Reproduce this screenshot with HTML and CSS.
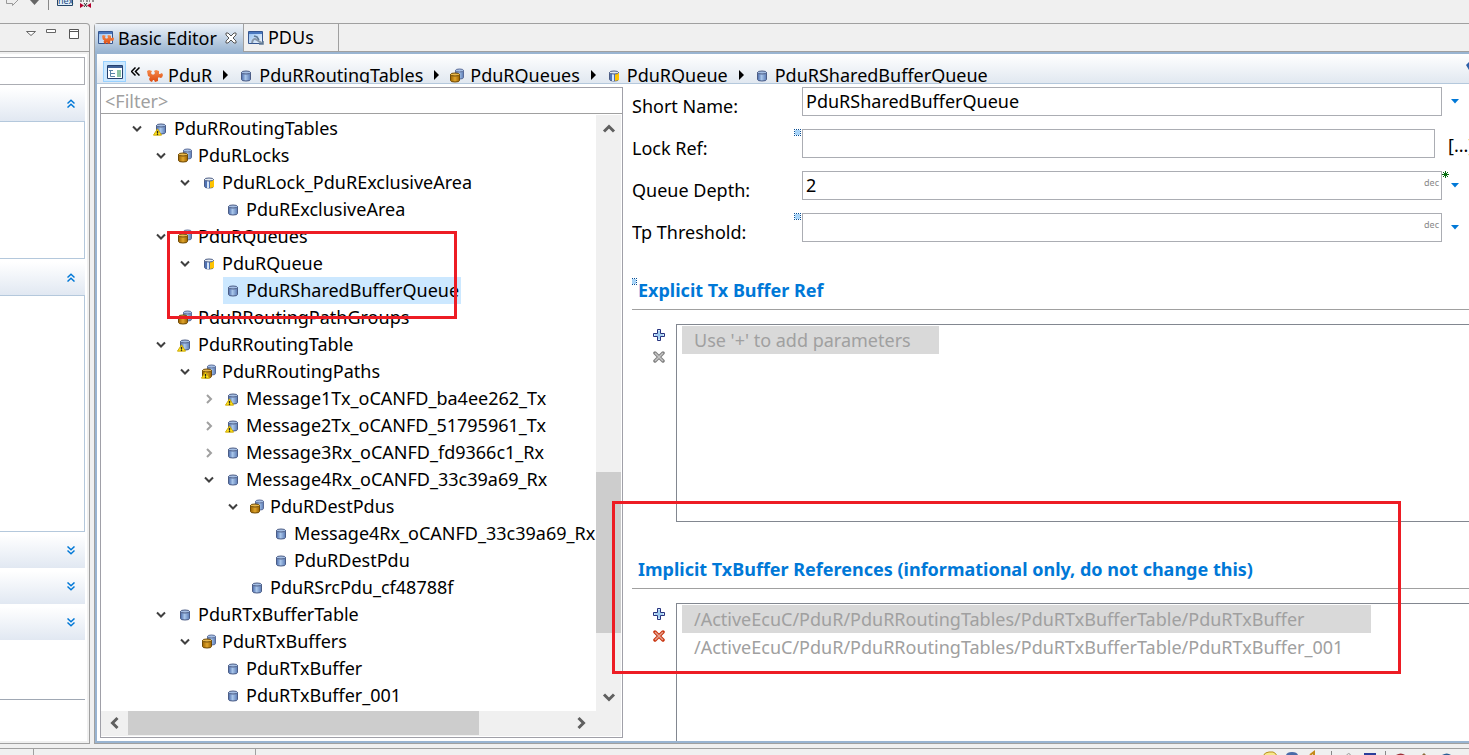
FILE: index.html
```
<!DOCTYPE html>
<html lang="en">
<head>
<meta charset="utf-8">
<title>Basic Editor</title>
<link rel="stylesheet" href="styles.css">
</head>
<body>
<svg class="defs" aria-hidden="true">
  <defs>
    <linearGradient id="g-blue"><stop offset="0" stop-color="#4a6bab"/><stop offset=".45" stop-color="#a9c6ea"/><stop offset="1" stop-color="#5b7bb5"/></linearGradient>
    <linearGradient id="g-gold"><stop offset="0" stop-color="#9a6200"/><stop offset=".5" stop-color="#e0a52c"/><stop offset="1" stop-color="#9a6200"/></linearGradient>
    <linearGradient id="g-orange" x2="0" y2="1"><stop offset="0" stop-color="#f58a4b"/><stop offset="1" stop-color="#dd4b10"/></linearGradient>
    <linearGradient id="g-win" x2="1" y2="1"><stop offset="0" stop-color="#8ebdf0"/><stop offset="1" stop-color="#f4f9ff"/></linearGradient>
  </defs>
  <symbol id="cyl" viewBox="0 0 16 16">
    <path d="M3.500 4.500v7q0 1.500 4.500 1.500t4.500-1.500v-7z" fill="url(#g-blue)" stroke="#4b5c85"/>
    <ellipse cx="8" cy="4.500" rx="4.500" ry="1.500" fill="#a5bfe4" stroke="#4b5c85"/>
  </symbol>
  <symbol id="choice" viewBox="0 0 16 16">
    <path d="M3.500 4.500v7q0 1.500 4.500 1.500t4.500-1.500v-7z" fill="#4f73b5" stroke="#4b5c85"/>
    <path d="M6 5h2v8H6z" fill="#d5e6fa"/>
    <path d="M9 5h4v7l-4 1z" fill="#ffc400"/>
    <ellipse cx="8" cy="4.500" rx="4.500" ry="1.500" fill="#e3eaf0" stroke="#4b5c85"/>
  </symbol>
  <symbol id="multi" viewBox="0 0 16 16">
    <path d="M6.500 2.500v7q0 1.500 4 1.500t4-1.500v-7z" fill="url(#g-blue)" stroke="#5b6c98"/>
    <ellipse cx="10.500" cy="2.500" rx="4" ry="1.500" fill="#a5bfe4" stroke="#5b6c98"/>
    <path d="M1.500 6.500v6q0 1.500 4.500 1.500t4.500-1.500v-6z" fill="url(#g-gold)" stroke="#6e4906"/>
    <ellipse cx="6" cy="6.500" rx="4.500" ry="1.500" fill="#e9b94d" stroke="#6e4906"/>
  </symbol>
  <symbol id="warn" viewBox="0 0 10 8">
    <path d="M5 .5 9.500 7.500H.5z" fill="#ffe11a" stroke="#c9a500"/><path d="M4.500 3h1v2h-1zM4.500 6h1v1h-1z" fill="#222" stroke="#222" stroke-width=".5"/>
  </symbol>
  <symbol id="puzzle" viewBox="0 0 16 14">
    <path d="M0 2l2-1 3 1-1 2 1 1.500h2L8 4 7 2l2-1 3 1v3h1l2-1 1 2-1 2.500-2 .5-1-1-1 1v3l-3 1-1-2H6l-1 2-2-1-1-2 1-2-2-1z" fill="url(#g-orange)"/>
  </symbol>
  <symbol id="down" viewBox="0 0 10 10"><path d="M1 2.500l4 4 4-4" fill="none" stroke="#404040" stroke-width="2"/></symbol>
  <symbol id="right" viewBox="0 0 10 10"><path d="M3 1l4 4-4 4" fill="none" stroke="#a0a0a0" stroke-width="2"/></symbol>
  <symbol id="arrow" viewBox="0 0 14 14"><path d="M2 9.500l5-5 5 5" fill="none" stroke="#606060" stroke-width="3"/></symbol>
  <symbol id="dbl" viewBox="0 0 8 8"><path d="M.5 4 4 .8 7.500 4M.5 8 4 4.800 7.500 8" fill="none" stroke="#0078d7" stroke-width="1.500"/></symbol>
  <symbol id="plus" viewBox="0 0 12 12"><path d="M4.500.5h3v4h4v3h-4v4h-3v-4h-4v-3h4z" fill="#d4ecfc" stroke="#26327e"/><path d="M6 2v8M2 6h8" stroke="#7db8ea"/></symbol>
  <symbol id="cross" viewBox="0 0 12 12"><path d="M2 2l8 8M10 2l-8 8" stroke="currentColor" stroke-width="3.500" stroke-linecap="round"/><path d="M2 2l8 8M10 2l-8 8" stroke="#fff" stroke-opacity=".55" stroke-width="1.500"/></symbol>
  <symbol id="caret" viewBox="0 0 8 5"><path d="M0 0h8L4 4.500z" fill="#0078d7"/></symbol>
  <symbol id="mark" viewBox="0 0 7 7"><path d="M1 1h5v5H1z" fill="#a8d4f8"/><path d="M0 0h1v1H0zM2 0h1v1H2zM4 0h1v1H4zM6 0h1v1H6zM0 2h1v1H0zM0 4h1v1H0zM0 6h1v1H0zM6 2h1v1H6zM6 4h1v1H6zM6 6h1v1H6zM2 6h1v1H2zM4 6h1v1H4z" fill="#0a4f94"/></symbol>
</svg>

<header class="toolbar">
  <svg width="100" height="12" aria-hidden="true">
    <path d="M6.500 0v3.500h6v2L18 0" fill="#eee" stroke="#999"/>
    <path d="M30 0h9l-4.500 5z" fill="#666"/><path d="M48.500 0v10" stroke="#888"/>
    <path d="M57.500 0v5.500h15V0" fill="#e3f0fb" stroke="#246"/>
    <text class="hex" x="58" y="4">hex</text>
    <path d="M80 1h2M83 1h1M86 1h2M89 1h1M92 1h2" stroke="#333"/>
    <path d="M80 3v5l4-2.500zM91 3v5l-4-2.500z" fill="#b3002d"/><path d="M84 3l3 4M87 3l-3 4" stroke="#333"/>
  </svg>
</header>

<main class="workbench">
  <aside class="side">
    <div class="side-head">
      <svg width="54" height="12" aria-hidden="true"><path d="M.5 2.500h9L5 6.500zM20.500.500h9v3h-9z" fill="#fff" stroke="#666"/><path d="M43.500.5h9v9h-9zM43 2.500h10" fill="#fff" stroke="#555"/></svg>
    </div>
    <div class="side-body">
      <input class="side-search" aria-label="Search">
      <button class="bar" aria-label="Collapse"><svg><use href="#dbl"/></svg></button>
      <div class="pane pane-a"></div>
      <button class="bar" aria-label="Collapse"><svg><use href="#dbl"/></svg></button>
      <div class="pane pane-b"></div>
      <button class="bar closed" aria-label="Expand"><svg><use href="#dbl"/></svg></button>
      <button class="bar closed" aria-label="Expand"><svg><use href="#dbl"/></svg></button>
      <button class="bar closed" aria-label="Expand"><svg><use href="#dbl"/></svg></button>
      <div class="rule"></div>
    </div>
  </aside>

  <section class="editor">
    <nav class="tabs">
      <button class="tab active">
        <svg width="17" height="16"><path d="M.5 1.500h14v12H.5z" fill="url(#g-win)" stroke="#35558f"/><path d="M1 2h13v2H1z" fill="#4a78bf"/><use href="#puzzle" x="4" y="4" width="12" height="11"/></svg>
        Basic Editor
        <svg class="close" width="12" height="12"><path d="M1 1h2l3 3 3-3h2v2L8 6l3 3v2H9L6 8l-3 3H1V9l3-3-3-3z" fill="#fff" stroke="#555"/></svg>
      </button>
      <button class="tab">
        <svg width="17" height="16"><path d="M.5 1.500h14v12H.5z" fill="url(#g-win)" stroke="#35558f"/><path d="M1 2h13v2H1z" fill="#4a78bf"/><path d="M4 13q1-6 5-3t6 3" fill="none" stroke="#8796a8" stroke-width="2"/><path d="M6 6l3 1 2 3M11 14h4v-3" fill="none" stroke="#5e7894" stroke-width="1.500"/></svg>
        PDUs
      </button>
    </nav>

    <div class="frame">
      <nav class="crumbs">
        <button class="outline" aria-label="Show tree"><svg width="16" height="14"><path d="M.5.5h15v13H.5z" fill="#fff" stroke="#25406e"/><path d="M1 1h14v2H1z" fill="#3f6299"/><path d="M10 5h4v7h-4z" fill="#8cc4a4"/><path d="M3.500 5v6.500H8M3.500 8.500H8M2 5.500h4" fill="none" stroke="#5c85a8"/></svg></button>
        <span class="back" aria-hidden="true"><svg width="9" height="9"><path d="M4.500.5l-4 4 4 4M8.500.5l-4 4 4 4" fill="none" stroke="#000" stroke-width="1.500"/></svg></span>
        <a href="#"><svg><use href="#puzzle"/></svg>PduR</a><i></i>
        <a href="#"><svg><use href="#cyl"/></svg>PduRRoutingTables</a><i></i>
        <a href="#"><svg><use href="#multi"/></svg>PduRQueues</a><i></i>
        <a href="#"><svg><use href="#choice"/></svg>PduRQueue</a><i></i>
        <a href="#"><svg><use href="#cyl"/></svg>PduRSharedBufferQueue</a>
        <svg class="more" width="3" height="8"><path d="M3 0L0 3l3 5z" fill="#2c5fa8"/></svg>
      </nav>

      <div class="content">
        <div class="outline-pane">
          <input class="filter" placeholder="&lt;Filter&gt;" aria-label="Filter">
          <div class="tree-area">
            <ul class="tree">
              <li><div class="row"><button class="tw" aria-label="Toggle"><svg><use href="#down"/></svg></button><span class="node"><svg><use href="#cyl"/><use href="#warn" x="0" y="7" width="9" height="8"/></svg>PduRRoutingTables</span></div>
                <ul>
                  <li><div class="row"><button class="tw" aria-label="Toggle"><svg><use href="#down"/></svg></button><span class="node"><svg><use href="#multi"/></svg>PduRLocks</span></div>
                    <ul>
                      <li><div class="row"><button class="tw" aria-label="Toggle"><svg><use href="#down"/></svg></button><span class="node"><svg><use href="#choice"/></svg>PduRLock_PduRExclusiveArea</span></div>
                        <ul><li><div class="row"><span class="tw"></span><span class="node"><svg><use href="#cyl"/></svg>PduRExclusiveArea</span></div></li></ul>
                      </li>
                    </ul>
                  </li>
                  <li><div class="row"><button class="tw" aria-label="Toggle"><svg><use href="#down"/></svg></button><span class="node"><svg><use href="#multi"/></svg>PduRQueues</span></div>
                    <ul>
                      <li><div class="row"><button class="tw" aria-label="Toggle"><svg><use href="#down"/></svg></button><span class="node"><svg><use href="#choice"/></svg>PduRQueue</span></div>
                        <ul><li><div class="row"><span class="tw"></span><span class="node selected"><svg><use href="#cyl"/></svg>PduRSharedBufferQueue</span></div></li></ul>
                      </li>
                    </ul>
                  </li>
                  <li><div class="row"><span class="tw"></span><span class="node"><svg><use href="#multi"/></svg>PduRRoutingPathGroups</span></div></li>
                  <li><div class="row"><button class="tw" aria-label="Toggle"><svg><use href="#down"/></svg></button><span class="node"><svg><use href="#cyl"/><use href="#warn" x="0" y="7" width="9" height="8"/></svg>PduRRoutingTable</span></div>
                    <ul>
                      <li><div class="row"><button class="tw" aria-label="Toggle"><svg><use href="#down"/></svg></button><span class="node"><svg><use href="#multi"/><use href="#warn" x="0" y="7" width="9" height="8"/></svg>PduRRoutingPaths</span></div>
                        <ul>
                          <li><div class="row"><button class="tw" aria-label="Toggle"><svg><use href="#right"/></svg></button><span class="node"><svg><use href="#cyl"/><use href="#warn" x="0" y="7" width="9" height="8"/></svg>Message1Tx_oCANFD_ba4ee262_Tx</span></div></li>
                          <li><div class="row"><button class="tw" aria-label="Toggle"><svg><use href="#right"/></svg></button><span class="node"><svg><use href="#cyl"/><use href="#warn" x="0" y="7" width="9" height="8"/></svg>Message2Tx_oCANFD_51795961_Tx</span></div></li>
                          <li><div class="row"><button class="tw" aria-label="Toggle"><svg><use href="#right"/></svg></button><span class="node"><svg><use href="#cyl"/></svg>Message3Rx_oCANFD_fd9366c1_Rx</span></div></li>
                          <li><div class="row"><button class="tw" aria-label="Toggle"><svg><use href="#down"/></svg></button><span class="node"><svg><use href="#cyl"/></svg>Message4Rx_oCANFD_33c39a69_Rx</span></div>
                            <ul>
                              <li><div class="row"><button class="tw" aria-label="Toggle"><svg><use href="#down"/></svg></button><span class="node"><svg><use href="#multi"/></svg>PduRDestPdus</span></div>
                                <ul>
                                  <li><div class="row"><span class="tw"></span><span class="node"><svg><use href="#cyl"/></svg>Message4Rx_oCANFD_33c39a69_Rx</span></div></li>
                                  <li><div class="row"><span class="tw"></span><span class="node"><svg><use href="#cyl"/></svg>PduRDestPdu</span></div></li>
                                </ul>
                              </li>
                              <li><div class="row"><span class="tw"></span><span class="node"><svg><use href="#cyl"/></svg>PduRSrcPdu_cf48788f</span></div></li>
                            </ul>
                          </li>
                        </ul>
                      </li>
                    </ul>
                  </li>
                  <li><div class="row"><button class="tw" aria-label="Toggle"><svg><use href="#down"/></svg></button><span class="node"><svg><use href="#cyl"/></svg>PduRTxBufferTable</span></div>
                    <ul>
                      <li><div class="row"><button class="tw" aria-label="Toggle"><svg><use href="#down"/></svg></button><span class="node"><svg><use href="#multi"/></svg>PduRTxBuffers</span></div>
                        <ul>
                          <li><div class="row"><span class="tw"></span><span class="node"><svg><use href="#cyl"/></svg>PduRTxBuffer</span></div></li>
                          <li><div class="row"><span class="tw"></span><span class="node"><svg><use href="#cyl"/></svg>PduRTxBuffer_001</span></div></li>
                        </ul>
                      </li>
                    </ul>
                  </li>
                </ul>
              </li>
            </ul>
            <div class="vscroll">
              <button aria-label="Scroll up"><svg><use href="#arrow"/></svg></button>
              <div class="track"><div class="thumb"></div></div>
              <button class="flip" aria-label="Scroll down"><svg><use href="#arrow"/></svg></button>
            </div>
          </div>
          <div class="hscroll">
            <button class="to-left" aria-label="Scroll left"><svg><use href="#arrow"/></svg></button>
            <div class="track"><div class="thumb"></div></div>
            <button class="to-right" aria-label="Scroll right"><svg><use href="#arrow"/></svg></button>
          </div>
          <div class="highlight highlight-tree"></div>
        </div>

        <div class="form">
          <div class="field"><label for="short">Short Name:</label><span class="box"><input id="short" value="PduRSharedBufferQueue"></span><button class="menu" aria-label="Menu"><svg><use href="#caret"/></svg></button></div>
          <div class="field"><label for="lock">Lock Ref:</label><span class="box"><svg class="mark"><use href="#mark"/></svg><input id="lock"></span><button class="browse">[...]</button></div>
          <div class="field"><label for="depth">Queue Depth:</label><span class="box"><input id="depth" value="2"><small>dec</small><svg class="star" viewBox="0 0 7 7"><path d="M3.500 0v7M0 3.500h7M1 1l5 5M6 1l-5 5" stroke="#0a6e14"/></svg></span><button class="menu" aria-label="Menu"><svg><use href="#caret"/></svg></button></div>
          <div class="field"><label for="tp">Tp Threshold:</label><span class="box"><svg class="mark"><use href="#mark"/></svg><input id="tp"><small>dec</small></span><button class="menu" aria-label="Menu"><svg><use href="#caret"/></svg></button></div>

          <section class="refs">
            <h2><svg class="mark"><use href="#mark"/></svg>Explicit Tx Buffer Ref</h2>
            <div class="refs-body">
              <div class="actions"><button aria-label="Add"><svg><use href="#plus"/></svg></button><button class="off" aria-label="Remove" disabled><svg><use href="#cross"/></svg></button></div>
              <ul class="list"><li class="picked">Use '+' to add parameters</li></ul>
            </div>
          </section>
          <section class="refs">
            <h2>Implicit TxBuffer References (informational only, do not change this)</h2>
            <div class="refs-body">
              <div class="actions"><button aria-label="Add"><svg><use href="#plus"/></svg></button><button class="on" aria-label="Remove"><svg><use href="#cross"/></svg></button></div>
              <ul class="list"><li class="picked">/ActiveEcuC/PduR/PduRRoutingTables/PduRTxBufferTable/PduRTxBuffer</li><li>/ActiveEcuC/PduR/PduRRoutingTables/PduRTxBufferTable/PduRTxBuffer_001</li></ul>
            </div>
          </section>
        </div>
        <div class="highlight highlight-refs"></div>
      </div>
    </div>
  </section>
</main>

<footer class="status">
  <span class="cell first"></span><span class="cell second"></span>
  <svg width="210" height="6" aria-hidden="true">
    <path d="M4 7q2-4 6-4h4q3 1 4 4" fill="#f7e88b" stroke="#b8901a"/>
    <path d="M27 6q1-3 6-3t6 3z" fill="#4a6ba8"/><path d="M51 6l4-3v3" fill="none" stroke="#c48a1a" stroke-width="2"/>
    <path d="M72.500 2v5M126.500 2v5" stroke="#888"/><path d="M87 7q3-5 5 0" fill="none" stroke="#999"/>
    <path d="M105 4h12v3h-12z" fill="#2b3f9b"/><path d="M137 6q5-3 9 0z" fill="#9b3037"/><path d="M163 6l2-2 2 2z" fill="#8a6b3a"/><path d="M183 6q5-3 9 0z" fill="#2b5d94"/>
  </svg>
</footer>
</body>
</html>
```
FILE: styles.css
```
* { box-sizing: border-box; }
body {
  margin: 0;
  height: 100vh;
  display: flex;
  flex-direction: column;
  overflow: hidden;
  background: #f0f0f0;
  color: #000;
  font: 18px/27px "Noto Sans", "Segoe UI", sans-serif;
}
button, input { font: inherit; color: inherit; margin: 0; }
button { padding: 0; border: 0; background: none; }
ul { list-style: none; margin: 0; padding: 0; }
svg { display: block; flex: none; }
.defs { position: absolute; width: 0; height: 0; }

.toolbar { height: 23px; flex: none; }
.hex { font: 9px/9px "Noto Sans", sans-serif; fill: #1a4a80; }

.workbench { flex: 1; min-height: 0; display: flex; gap: 4px; }

/* left view */
.side { width: 90px; flex: none; display: flex; flex-direction: column; border: 1px solid #a0a0a0; border-left: 0; border-top-right-radius: 4px; }
.side-head { height: 28px; flex: none; padding: 5px 9px 0 0; display: flex; justify-content: flex-end; border-bottom: 1px solid #a0a0a0; }
.side-body { flex: 1; min-height: 0; overflow: hidden; margin: 2px 2px 2px 0; padding: 3px 2px 0 0; display: flex; flex-direction: column; background: #fff; }
.side-search { width: 100%; height: 28px; flex: none; border: 1px solid #abadb3; border-left: 0; }
.bar { flex: none; height: 33px; margin-top: 3px; padding: 0 10px 2px 0; display: flex; align-items: center; justify-content: flex-end; background: linear-gradient(#fff, #e1e8f2); }
.bar svg { width: 8px; height: 9px; }
.closed svg { transform: scaleY(-1); }
.pane { flex: none; border: 1px solid #b4c8dc; border-left: 0; }
.pane-a { height: 138px; }
.pane-b { height: 237px; }
.rule { margin-top: 59px; height: 1px; flex: none; background: #a0a8b4; }

/* editor */
.editor { flex: 1; min-width: 0; display: flex; flex-direction: column; border: 1px solid #a0a0a0; border-right: 0; border-top-left-radius: 4px; }
.tabs { height: 28px; flex: none; display: flex; border-bottom: 1px solid #a0a0a0; }
.tab { display: flex; align-items: center; gap: 3px; padding: 0 24px 0 4px; border-right: 1px solid #a0a0a0; }
.tab.active { padding: 0 6px 0 3px; height: 28px; background: linear-gradient(#eef3f9, #99b4d1); }
.close { margin-left: 5px; }
.frame { flex: 1; min-height: 0; display: flex; flex-direction: column; border: solid #99b4d1; border-width: 2px 0 2px 2px; background: #fff; }
.crumbs { height: 30px; flex: none; overflow: hidden; display: flex; align-items: flex-start; padding: 8px 0 0 6px; background: linear-gradient(#fff, #e1e8f0); border-bottom: 1px solid #b4c8dc; }
.crumbs a { display: flex; align-items: center; gap: 5px; color: inherit; text-decoration: none; white-space: nowrap; }
.crumbs a svg { width: 16px; height: 16px; }
.crumbs i { border: solid transparent; border-width: 5px 0 5px 5px; border-left-color: #000; margin: 8px 10px 0 11px; }
.outline { width: 23px; height: 21px; margin: -1px 5px 0 0; flex: none; display: grid; place-items: center; background: #cce8ff; border: 1px solid #99d1ff; }
.back { padding: 5px 7px 0 0; }
.more { margin-left: auto; }
.content { position: relative; flex: 1; min-height: 0; display: flex; gap: 9px; padding: 3px 0 0 3px; }

.outline-pane { position: relative; width: 523px; flex: none; margin-bottom: 3px; display: flex; flex-direction: column; border: 1px solid #a0a0a8; }
.filter { height: 26px; flex: none; padding: 2px 4px 0; border: 0; border-bottom: 1px solid #a0a0a0; outline: 0; }
.filter::placeholder { color: #a0a0a0; opacity: 1; }
.tree-area { flex: 1; min-height: 0; display: flex; padding: 1px 1px 0 0; }
.tree { flex: 1; min-width: 0; overflow: hidden; padding-left: 26px; }
.tree ul { padding-left: 24px; }
.row { height: 27px; display: flex; align-items: center; white-space: nowrap; }
.tw { width: 24px; flex: none; padding-left: 5px; }
.tw svg { width: 10px; height: 10px; }
.node { display: flex; align-items: center; height: 27px; padding: 0 2px 0 2px; gap: 5px; }
.node svg { width: 16px; height: 16px; }
.selected { background: #cce8ff; }
.vscroll { width: 25px; display: flex; flex-direction: column; background: #f0f0f0; }
.vscroll button { height: 28px; display: grid; place-items: center; }
.vscroll svg, .hscroll svg { width: 14px; height: 14px; }
.vscroll .track { flex: 1; padding-top: 329px; }
.vscroll .thumb { height: 161px; background: #cdcdcd; }
.flip svg { transform: rotate(180deg); }
.hscroll { height: 25px; flex: none; display: flex; padding: 0 27px 1px 1px; margin: 0 1px 1px 0; background: #f0f0f0; }
.hscroll button { width: 26px; display: grid; place-items: center; }
.hscroll .track { flex: 1; }
.hscroll .thumb { width: 351px; height: 24px; background: #cdcdcd; }
.to-left svg { transform: rotate(-90deg); }
.to-right svg { transform: rotate(90deg); }

.form { flex: 1; min-width: 0; overflow: hidden; }
.field { height: 42px; display: flex; align-items: flex-start; }
.field label { width: 170px; flex: none; padding-top: 6px; }
.box { position: relative; flex: 1; display: flex; }
.box input { width: 100%; height: 29px; padding: 0 4px 1px 3px; border: 1px solid #abadb3; background: #fff; outline: 0; }
.box small { position: absolute; right: 3px; top: 5px; font-size: 9px; line-height: 14px; color: #888; }
.mark { position: absolute; left: -8px; top: 0; width: 7px; height: 7px; }
.star { position: absolute; right: -7px; top: 0; width: 7px; height: 7px; }
.menu { width: 27px; height: 29px; flex: none; padding-left: 9px; }
.menu svg { width: 8px; height: 5px; }
.browse { width: 34px; flex: none; padding: 3px 0 0 13px; text-align: left; white-space: nowrap; }

.refs { margin-bottom: 12px; }
.refs h2 { position: relative; height: 55px; margin: 0 0 14px; padding: 22px 0 0 6px; border-bottom: 1px solid #a0a0a0; font-size: 18px; line-height: 27px; color: #0078d7; white-space: nowrap; }
.refs h2 .mark { left: -2px; top: 23px; }
.refs-body { display: flex; }
.actions { width: 44px; flex: none; padding: 5px 0 0 21px; display: flex; flex-direction: column; gap: 10px; }
.actions svg { width: 12px; height: 12px; }
.off { color: #808080; }
.on { color: #c8320c; }
.list { flex: 1; height: 198px; padding: 1px 5px; border: 1px solid #828790; border-right: 0; color: #a0a0a0; line-height: 28px; white-space: nowrap; display: grid; justify-content: start; align-content: start; }
.list li { padding: 0 28px 0 12px; }
.picked { background: #d9d9d9; }

/* red frames laid over the panels */
.highlight { position: absolute; border: 3px solid #ed1c24; pointer-events: none; }
.highlight-tree { left: 66px; top: 143px; width: 290px; height: 88px; }
.highlight-refs { left: 515px; top: 417px; right: 68px; height: 173px; }

.status { height: 7px; flex: none; margin-top: 4px; display: flex; border-top: 1px solid #a0a0a0; }
.cell { border-right: 1px solid #a0a0a0; }
.first { width: 34px; }
.second { width: 222px; }
.status svg { margin-left: auto; }
```
